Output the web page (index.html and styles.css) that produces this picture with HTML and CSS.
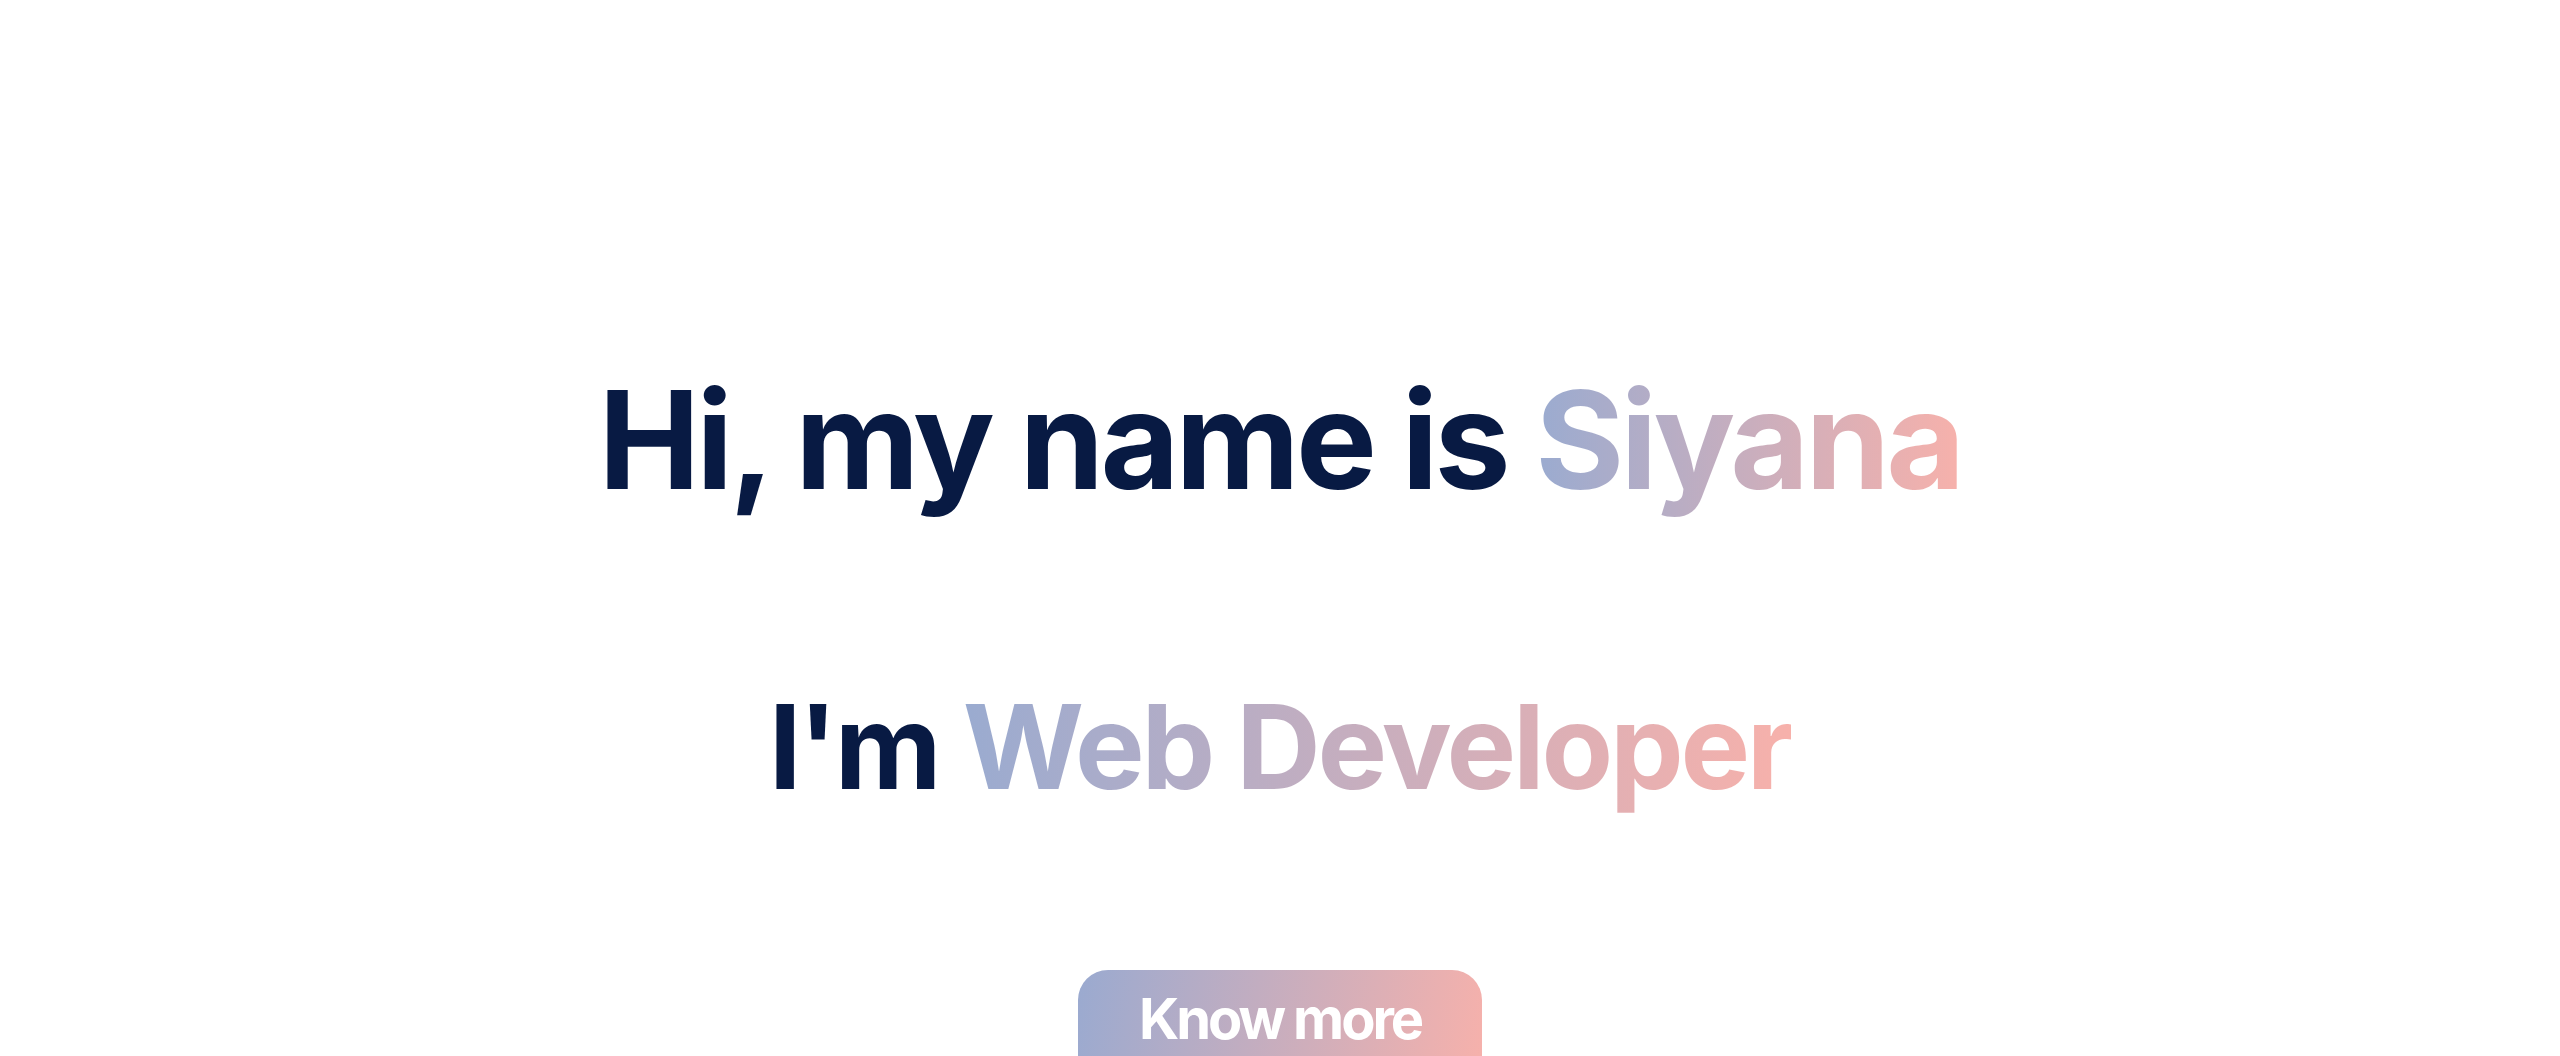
FILE: index.html
```html
<!DOCTYPE html>
<html lang="en">
<head>
<meta charset="utf-8">
<title>Siyana</title>
<link rel="stylesheet" href="styles.css">
</head>
<body>
<main class="hero">
  <h1 class="hero-title">Hi, my name is <span class="grad-text">Siyana</span></h1>
  <h2 class="hero-role">I'm <span class="grad-text">Web Developer</span></h2>
  <a class="hero-btn" href="#">Know more</a>
</main>
</body>
</html>
```
FILE: styles.css
```css
* { box-sizing: border-box; }
html, body { margin: 0; padding: 0; background: #ffffff; }
body {
  font-family: Inter, "Noto Sans", "Liberation Sans", sans-serif;
  color: #081a43;
  overflow: hidden;
  height: 1056px;
}
.hero {
  display: flex;
  flex-direction: column;
  align-items: center;
  padding-top: 372px;
}
.hero-title {
  margin: 0;
  font-size: 136px;
  font-weight: 700;
  line-height: 1;
  letter-spacing: -0.028em;
  white-space: nowrap;
}
.hero-role {
  margin: 180px 0 0;
  font-size: 117px;
  font-weight: 700;
  line-height: 1;
  letter-spacing: -0.028em;
  white-space: nowrap;
}
.grad-text {
  background: linear-gradient(90deg, #9aabd0 0%, #f7b1ab 100%);
  -webkit-background-clip: text;
  background-clip: text;
  color: transparent;
  padding-bottom: 0.25em;
}
.hero-btn {
  margin-top: 165px;
  display: block;
  padding: 21px 61px 40px;
  border-radius: 30px;
  background: linear-gradient(100deg, #9aaad0 0%, #f7b1ab 100%);
  color: #ffffff;
  font-size: 56px;
  font-weight: 700;
  line-height: 1;
  letter-spacing: -0.055em;
  text-decoration: none;
}
```
